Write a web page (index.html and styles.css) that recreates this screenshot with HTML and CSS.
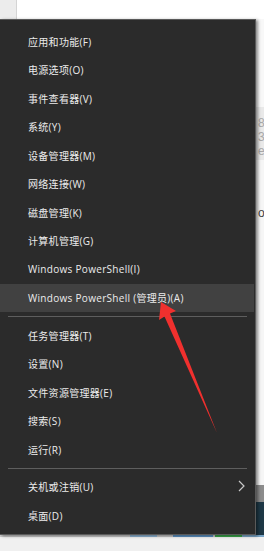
FILE: index.html
```html
<!DOCTYPE html>
<html lang="zh-CN">
<head>
<meta charset="utf-8">
<title>Win+X</title>
<link rel="stylesheet" href="styles.css">
</head>
<body>
<div class="screen">
  <div class="top">
    <div class="top-side"></div>
    <div class="top-main"></div>
  </div>
  <div class="row">
    <nav class="menu">
      <div class="item">应用和功能(F)</div>
      <div class="item">电源选项(O)</div>
      <div class="item">事件查看器(V)</div>
      <div class="item">系统(Y)</div>
      <div class="item">设备管理器(M)</div>
      <div class="item">网络连接(W)</div>
      <div class="item">磁盘管理(K)</div>
      <div class="item">计算机管理(G)</div>
      <div class="item">Windows PowerShell(I)</div>
      <div class="item active">Windows PowerShell (管理员)(A)</div>
      <div class="sep"></div>
      <div class="item">任务管理器(T)</div>
      <div class="item">设置(N)</div>
      <div class="item">文件资源管理器(E)</div>
      <div class="item">搜索(S)</div>
      <div class="item">运行(R)</div>
      <div class="sep"></div>
      <div class="item">关机或注销(U)<svg class="chev" width="7" height="12" viewBox="0 0 7 12"><polyline points="1,1 6,6 1,11" fill="none" stroke="#c8c8c8" stroke-width="1.2"/></svg></div>
      <div class="item">桌面(D)</div>
    </nav>
    <div class="side">
      <div class="s-white"></div>
      <div class="s-gray"><span>8</span><span>3</span><span>e</span></div>
      <div class="s-white2"><span class="o">o</span></div>
      <div class="s-mid"></div>
      <div class="s-teal"></div>
    </div>
  </div>
  <div class="bottom">
    <div class="strip">
      <span class="g1"></span><span class="b1"></span><span class="g2"></span><span class="b2"></span><span class="g3"></span><span class="gr"></span><span class="g4"></span>
    </div>
  </div>
  <svg class="arrow" width="264" height="551" viewBox="0 0 264 551">
    <polygon points="161,302 176,311 170,313.5 217,433 164.5,316.5 159,320" fill="#f0302e"/>
  </svg>
</div>
</body>
</html>
```
FILE: styles.css
```css
* { box-sizing: border-box; }
html, body { margin: 0; padding: 0; }
body {
  width: 264px;
  height: 551px;
  overflow: hidden;
  background: #f0f0f0;
  font-family: "Open Sans", "Noto Sans CJK SC", sans-serif;
}
.screen {
  position: relative;
  width: 264px;
  height: 551px;
  overflow: hidden;
  display: flex;
  flex-direction: column;
}
.top {
  height: 19px;
  display: flex;
  flex: none;
}
.top-side {
  width: 17px;
  background: #ececec;
  border-right: 1px solid #d4d4d4;
}
.top-main {
  flex: 1;
  background: #ffffff;
}
.row {
  display: flex;
  height: 516px;
  flex: none;
}
.menu {
  width: 256px;
  height: 516px;
  flex: none;
  background: #2b2b2b;
  border: 1px solid #5a5a5a;
  border-left: none;
  padding: 7px 0 0 0;
  box-shadow: 2px 1px 3px rgba(0,0,0,0.45);
  position: relative;
  z-index: 1;
  display: flex;
  flex-direction: column;
}
.item {
  height: 28.5px;
  display: flex;
  align-items: center;
  padding: 0 10px 0 28px;
  font-size: 10px;
  letter-spacing: 0.3px;
  color: #ececec;
  white-space: nowrap;
  flex: none;
}
.item.active {
  background: #414141;
  margin-right: 1px;
}
.chev {
  margin-left: auto;
  margin-top: -1px;
}
.sep {
  flex: none;
  height: 1px;
  margin: 4px 8px 4px 8px;
  background: #5e5e5e;
}
.side {
  flex: 1;
  display: flex;
  flex-direction: column;
  font-family: "Liberation Sans", sans-serif;
  font-size: 12px;
  overflow: hidden;
}
.s-white {
  height: 88px;
  background: #f8f8f8;
}
.s-gray {
  height: 53px;
  background: #e9e9e9;
  display: flex;
  flex-direction: column;
  padding: 9px 0 0 2px;
  color: #a8a8a8;
  line-height: 14px;
}
.s-white2 {
  flex: 1;
  background: #f6f6f6;
  padding: 46px 0 0 2px;
  color: #444;
}
.s-mid {
  height: 17px;
  background: #8c8c8c;
}
.s-teal {
  height: 33px;
  background: #1e3846;
}
.bottom {
  flex: 1;
  background: #f0f0f0;
}
.strip {
  display: flex;
  height: 2px;
}
.strip span { display: block; height: 2px; }
.g1 { width: 130px; background: #c9c9c9; }
.b1 { width: 27px; background: #8fb6d6; }
.g2 { width: 16px; background: #c9c9c9; }
.b2 { width: 40px; background: #5d93c4; }
.g3 { width: 2px; background: #c9c9c9; }
.gr { width: 27px; background: #3aa64a; }
.g4 { flex: 1; background: #7aa6c8; }
.arrow {
  position: absolute;
  left: 0;
  top: 0;
  z-index: 5;
  pointer-events: none;
}
```
